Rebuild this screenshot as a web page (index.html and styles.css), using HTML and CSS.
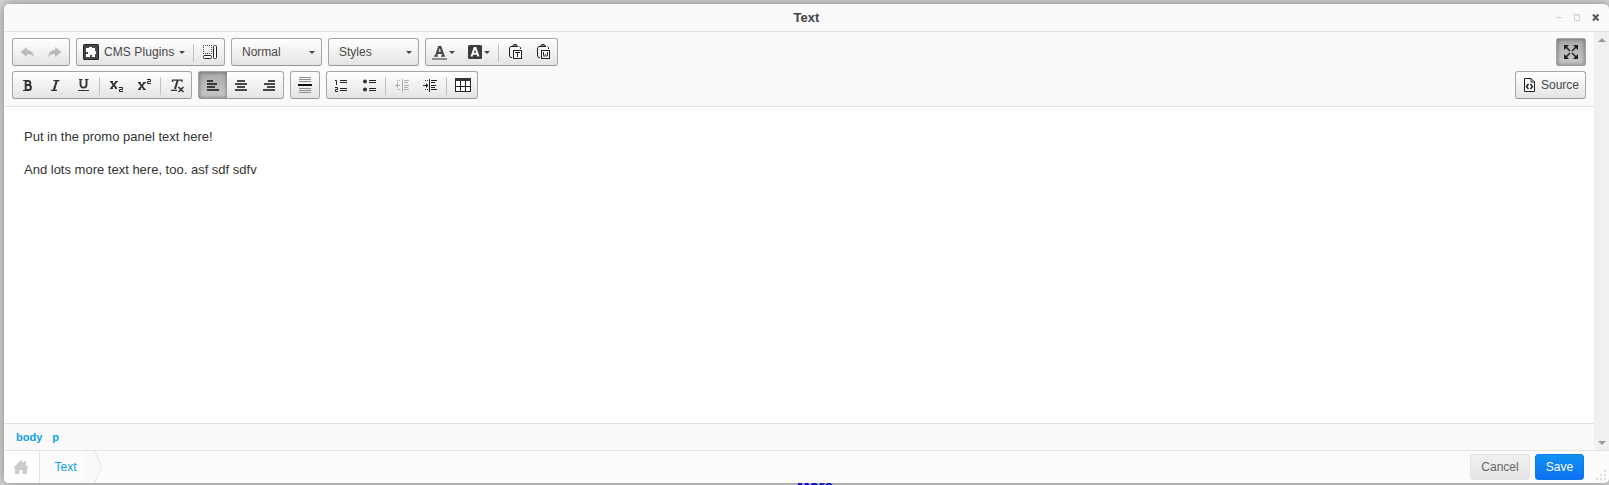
FILE: index.html
```html
<!DOCTYPE html>
<html lang="en">
<head>
<meta charset="utf-8">
<title>Text</title>
<link rel="stylesheet" href="styles.css">
</head>
<body>
<div class="page-link">More</div>
<div class="dialog">
  <header class="titlebar">
    <h1>Text</h1>
    <div class="window-controls">
      <svg width="60" height="26" viewBox="0 0 60 26"><path d="M2 13.500h6" stroke="#d2d2d2"/><path d="M20.500 10.500h5v6h-5zM20 11h6" fill="none" stroke="#d2d2d2"/><path d="M39 10.500l5.500 6M44.500 10.500l-5.500 6" stroke="#555" stroke-width="2"/></svg>
    </div>
  </header>
  <div class="main">
    <div class="editor">
      <div class="toolbar">
        <div class="tools">
          <div class="row">
            <div class="group">
              <span class="btn off"><svg class="ic" viewBox="0 0 16 16"><path d="M1.500 8L8 3v3c4 0 6.500 2.500 6.800 7C13.500 10.800 11.500 10 8 10v3z" fill="#555"/></svg></span>
              <span class="btn off"><svg class="ic" viewBox="0 0 16 16"><path d="M14.500 8L8 3v3c-4 0-6.500 2.500-6.800 7C2.500 10.800 4.500 10 8 10v3z" fill="#555"/></svg></span>
            </div>
            <div class="group">
              <span class="btn plugins"><svg class="ic" viewBox="0 0 16 16"><rect width="16" height="16" rx="1.500" fill="#222"/><rect x="1" y="1" width="14" height="14" fill="#484848"/><path d="M3 4h3V3h3v1h3v3h1v3h-1v3H9v-2H7v2H3v-3h2V8H3z" fill="#fff"/></svg><span class="label">CMS Plugins</span><i class="arrow"></i></span>
              <i class="sep"></i>
              <span class="btn"><svg class="ic" viewBox="0 0 16 16"><path d="M1 1.500h9M1 9.500h9M1.500 1v9M9.500 1v9" stroke="#444" stroke-dasharray="1 1"/><rect x="1.500" y="11.500" width="8" height="3" rx="1" fill="#fff" stroke="#222"/><rect x="11.500" y="1.500" width="3" height="13" rx="1" fill="#fff" stroke="#222"/></svg></span>
            </div>
            <div class="group combo"><span class="label">Normal</span><i class="arrow"></i></div>
            <div class="group combo"><span class="label">Styles</span><i class="arrow"></i></div>
            <div class="group">
              <span class="btn color"><svg class="ic" viewBox="0 0 16 16"><path d="M4 12L7 3h1.500L11.500 12M5.500 8.800h5" fill="none" stroke="#484848" stroke-width="2.200"/><path d="M2 12.200h4M9 12.200h4" stroke="#484848" stroke-width="1.200"/><path d="M0 15h15" stroke="#8b8b8b" stroke-width="2"/></svg><i class="arrow"></i></span>
              <span class="btn color"><svg class="ic" viewBox="0 0 16 16"><rect x="1" y="1" width="14" height="14" rx="1.500" fill="#3c3c3c"/><path d="M4.500 12.500L7.500 4h1L11.500 12.500M6 9.700h4.500" fill="none" stroke="#fff" stroke-width="1.900"/></svg><i class="arrow"></i></span>
              <i class="sep"></i>
              <span class="btn"><svg class="ic" viewBox="0 0 16 16"><path d="M5 2.500H3.500L2.500 4v8l1 1.500H5M12.500 2.500l1 1V5" fill="none" stroke="#222"/><path d="M5 3V1.500h1.500V0h3v1.500H11V3z" fill="#222"/><path d="M7.500 1.500h1" stroke="#fff"/><rect x="6.500" y="6.500" width="8" height="8" fill="#fff" stroke="#222"/><path d="M8 8.500h5M10.500 8v5" stroke="#222"/></svg></span>
              <span class="btn"><svg class="ic" viewBox="0 0 16 16"><path d="M5 2.500H3.500L2.500 4v8l1 1.500H5M12.500 2.500l1 1V5" fill="none" stroke="#222"/><path d="M5 3V1.500h1.500V0h3v1.500H11V3z" fill="#222"/><path d="M7.500 1.500h1" stroke="#fff"/><rect x="6.500" y="6.500" width="8" height="8" fill="#fff" stroke="#222"/><path d="M8.500 8v3.500l.8 1 1.200-2 1.200 2 .8-1V8" fill="none" stroke="#222"/></svg></span>
            </div>
          </div>
          <div class="row">
            <div class="group">
              <span class="btn"><svg class="ic" viewBox="0 0 16 16"><path d="M6 4h3.300c2.600 0 2.600 4 0 4H6.500M6 13h3.500c3.200 0 3.200-5 0-5M6.700 3v11" fill="none" stroke="#333" stroke-width="2"/><path d="M4 3.500h3M4 13.500h3" stroke="#333"/></svg></span>
              <span class="btn"><svg class="ic" viewBox="0 0 16 16"><path d="M6.500 3.600h6M4 13.400h6" stroke="#333" stroke-width="1.300"/><path d="M9.800 3.500l-3 10" stroke="#333" stroke-width="2.100"/></svg></span>
              <span class="btn"><svg class="ic" viewBox="0 0 16 16"><path d="M5.500 2v5.500c0 4.200 6 4.200 6 0V2" fill="none" stroke="#333" stroke-width="1.900"/><path d="M4 2.500h3.500M10 2.500h3.500M3 13.500h11" stroke="#333"/></svg></span>
              <i class="sep"></i>
              <span class="btn"><svg class="ic" viewBox="0 0 16 16"><path d="M3 4.500l5.500 7M8.500 4.500L3 11.500" stroke="#333" stroke-width="1.900"/><path d="M2 4.500h3M7 4.500h3M2 11.500h3M7 11.500h2" stroke="#333"/><path d="M11 10.500h3.500v2h-3v2H15" fill="none" stroke="#222"/></svg></span>
              <span class="btn"><svg class="ic" viewBox="0 0 16 16"><path d="M3 5.500l5.500 7M8.500 5.500L3 12.500" stroke="#333" stroke-width="1.900"/><path d="M2 5.500h3M7 5.500h3M2 12.500h3M7 12.500h3" stroke="#333"/><path d="M11 2.500h3.500v2h-3v2H15" fill="none" stroke="#222"/></svg></span>
              <i class="sep"></i>
              <span class="btn"><svg class="ic" viewBox="0 0 16 16"><path d="M3.500 5V3.200h9.500v1.800" fill="none" stroke="#333" stroke-width="1.300"/><path d="M8.800 3L6 12" stroke="#333" stroke-width="2"/><path d="M2 13.400h6" stroke="#333" stroke-width="1.200"/><path d="M9.500 10l5 5M14.500 10l-5 5" stroke="#333" stroke-width="1.500"/></svg></span>
            </div>
            <div class="group">
              <span class="btn on"><svg class="ic" viewBox="0 0 16 16"><path d="M2 4h6M2 7h10M2 10h8M2 13h12" stroke="#111" stroke-width="1.500"/></svg></span>
              <span class="btn"><svg class="ic" viewBox="0 0 16 16"><path d="M4 4h8M2 7h12M4 10h8M2 13h12" stroke="#111" stroke-width="1.500"/></svg></span>
              <span class="btn"><svg class="ic" viewBox="0 0 16 16"><path d="M7 4h7M3 7h11M6 10h8M2 13h12" stroke="#111" stroke-width="1.500"/></svg></span>
            </div>
            <div class="group">
              <span class="btn"><svg class="ic" viewBox="0 0 16 16"><path d="M2 .5h12M2 2.500h12M2 4.500h12M2 11.500h12M2 13.500h12M2 15.500h12" stroke="#8c8c8c"/><path d="M1 8h14" stroke="#111" stroke-width="2"/></svg></span>
            </div>
            <div class="group">
              <span class="btn"><svg class="ic" viewBox="0 0 16 16"><path d="M2 3.500h1.500V8M2 10.500h2.500v2h-2v2H5" fill="none" stroke="#222"/><path d="M7 3.500h7M7 5.500h7M7 11.500h7M7 13.500h7" stroke="#222"/></svg></span>
              <span class="btn"><svg class="ic" viewBox="0 0 16 16"><circle cx="4" cy="4.500" r="2" fill="#333"/><circle cx="4" cy="12.500" r="2" fill="#333"/><path d="M8 3.500h7M8 5.500h7M8 11.500h7M8 13.500h7" stroke="#222"/></svg></span>
              <i class="sep"></i>
              <span class="btn off"><svg class="ic" viewBox="0 0 16 16"><path d="M1 8.500h5M3.500 6.500v4M2.500 7.500v2M8.500 2v13" stroke="#333"/><path d="M3 3.500h4M3 5.500h2M3 12.500h4" stroke="#333" stroke-dasharray="1 1"/><path d="M10 3.500h5M10 5.500h4M10 8.500h5M10 10.500h4M10 12.500h5" stroke="#333"/></svg></span>
              <span class="btn"><svg class="ic" viewBox="0 0 16 16"><path d="M1 8.500h5M4.500 6.500v4M5.500 7.500v2M7.500 2v13" stroke="#222"/><path d="M3 3.500h4M3 12.500h4" stroke="#333" stroke-dasharray="1 1"/><path d="M9 3.500h6M9 5.500h4M9 8.500h5M9 10.500h4M9 12.500h6" stroke="#222"/></svg></span>
              <i class="sep"></i>
              <span class="btn"><svg class="ic" viewBox="0 0 16 16"><rect x=".5" y="1.500" width="15" height="13" fill="#fff" stroke="#222"/><path d="M0 2.500h16" stroke="#333" stroke-width="3"/><path d="M1 9.500h14M5.500 4v11M10.500 4v11" stroke="#222"/></svg></span>
            </div>
          </div>
        </div>
        <div class="view-tools">
          <div class="group"><span class="btn on"><svg class="ic" viewBox="0 0 16 16"><path d="M1 1h5L4.500 2.500 4 4 2.500 4.500 1 6zM15 1h-5l1.500 1.500L12 4l1.500.5L15 6zM1 15h5l-1.500-1.500L4 12l-1.500-.5L1 10zM15 15h-5l1.500-1.500L12 12l1.500-.5L15 10z" fill="#222"/><path d="M3 3l4 4M13 3L9 7M3 13l4-4M13 13L9 9" stroke="#222" stroke-width="1.500"/></svg></span></div>
          <div class="group"><span class="btn source"><svg class="ic" viewBox="0 0 16 16"><path d="M2.500 1.500h6.500l3.500 3.500v9.500h-10z" fill="#fff" stroke="#222"/><path d="M9 1.500v3.500h3.500" fill="none" stroke="#222"/><path d="M6.500 7L4.500 9.500l2 2.500M8.500 7l2 2.500-2 2.500" fill="none" stroke="#222" stroke-width="1.500"/></svg><span class="label">Source</span></span></div>
        </div>
      </div>
      <div class="content">
        <p>Put in the promo panel text here!</p>
        <p>And lots more text here, too. asf sdf sdfv</p>
      </div>
      <div class="path"><span>body</span><span>p</span></div>
    </div>
    <div class="scrollbar"><i class="up"></i><i class="down"></i></div>
  </div>
  <footer class="footer">
    <span class="home"><svg width="16" height="15" viewBox="0 0 16 15"><path d="M8 0l3 3V1h2v4l3 3h-2v6H9.500v-4h-3v4H2V8H0z" fill="#ccc"/></svg></span>
    <span class="crumb">Text</span>
    <svg class="chevron" width="19" height="32" viewBox="0 0 19 32"><path d="M0 0h10l8 16-8 16H0z" fill="#f9f9f9"/><path d="M10.500 0l7.500 16-7.500 16" fill="none" stroke="#e2e2e2"/></svg>
    <span class="action cancel">Cancel</span>
    <span class="action save">Save</span>
    <svg class="grip" width="12" height="12" viewBox="0 0 12 12"><path d="M8 0h2v2H8zM4 4h2v2H4zM8 4h2v2H8zM0 8h2v2H0zM4 8h2v2H4zM8 8h2v2H8z" fill="#dcdcdc"/></svg>
  </footer>
</div>
</body>
</html>
```
FILE: styles.css
```css
* { box-sizing: border-box; }
body {
  margin: 0;
  height: 485px;
  padding: 4px 0 2px 4px;
  overflow: hidden;
  position: relative;
  background: #d6d6d6;
  font-family: "Liberation Sans", Arial, sans-serif;
}
.dialog {
  position: relative;
  display: flex;
  flex-direction: column;
  height: 479px;
  border-radius: 5px;
  background: #fafafa;
  overflow: hidden;
  box-shadow: 0 0 12px rgba(0, 0, 0, .4);
}
.page-link {
  position: absolute;
  z-index: 1;
  left: 797px;
  top: 477px;
  font-size: 15px;
  line-height: 17px;
  font-weight: bold;
  color: #00c;
  clip-path: inset(6px 0 0);
}
.titlebar {
  position: relative;
  flex: 0 0 28px;
  border-bottom: 1px solid #e2e2e2;
}
.titlebar h1 {
  margin: 0;
  text-align: center;
  font: bold 13px/27px "Liberation Sans", Arial, sans-serif;
  color: #444;
}
.window-controls { position: absolute; right: 0; top: 0; width: 55px; }
.window-controls svg { display: block; }
.main { flex: 1; display: flex; min-height: 0; }
.editor { flex: 1; display: flex; flex-direction: column; }
.toolbar {
  display: flex;
  justify-content: space-between;
  height: 75px;
  padding: 6px 8px 0;
  border-bottom: 1px solid #e2e2e2;
}
.tools, .view-tools { display: flex; flex-direction: column; gap: 5px; }
.view-tools { align-items: flex-end; }
.row { display: flex; gap: 6px; }
.group {
  display: flex;
  height: 28px;
  border: 1px solid #a6a6a6;
  border-bottom-color: #979797;
  border-radius: 3px;
  background: linear-gradient(#fff, #e4e4e4);
}
.btn { display: flex; align-items: center; justify-content: center; width: 28px; height: 26px; }
.ic { width: 16px; height: 16px; flex: none; }
.off .ic { opacity: .35; }
.on { background: linear-gradient(#aaa, #cacaca); box-shadow: inset 0 0 4px rgba(0, 0, 0, .45); }
.sep { width: 1px; height: 18px; margin: 5px 2px 0; background: #c0c0c0; }
.label { font-size: 12px; line-height: 26px; color: #474747; white-space: nowrap; }
.arrow {
  flex: none;
  width: 0;
  border: 3px solid transparent;
  border-top-color: #474747;
  border-bottom: 0;
}
.plugins { width: 114px; justify-content: flex-start; padding-left: 6px; }
.plugins .label { margin: 0 6px 0 5px; width: 69px; letter-spacing: .09px; }
.combo { width: 91px; align-items: center; justify-content: space-between; padding: 0 6px 0 10px; }
.color { width: 35px; justify-content: flex-start; padding-left: 6px; }
.color .arrow { margin-left: 1px; }
.source { width: 69px; justify-content: flex-start; padding-left: 6px; }
.source .label { margin-left: 3px; }
.content { flex: 1; background: #fff; padding: 20px; color: #333; }
.content p { margin: 0 0 13px; font-size: 13px; line-height: 20px; }
.path {
  height: 27px;
  border-top: 1px solid #e2e2e2;
  padding-left: 12px;
  display: flex;
  gap: 10px;
  font-size: 11px;
  line-height: 26px;
  font-weight: bold;
  color: #0e9fe8;
}
.scrollbar {
  width: 15px;
  background: #f0f0f0;
  display: flex;
  flex-direction: column;
  justify-content: space-between;
  padding: 6px 4px 5px;
}
.up, .down { width: 0; border: 4px solid transparent; }
.up { border-top: 0; border-bottom-color: #999; }
.down { border-bottom: 0; border-top-color: #999; }
.footer {
  position: relative;
  flex: 0 0 33px;
  min-height: 0;
  display: flex;
  border-top: 1px solid #e2e2e2;
  background: #fcfcfc;
  padding-right: 25px;
}
.home {
  width: 36px;
  background: #fff;
  border-right: 1px solid #e2e2e2;
  display: flex;
  align-items: center;
  justify-content: center;
  padding: 1px 1px 0 0;
}
.crumb { width: 44px; padding-left: 14.5px; font-size: 12px; line-height: 32px; color: #0e9fe8; }
.chevron { margin-right: auto; }
.action {
  height: 26px;
  margin-top: 3px;
  border: 1px solid #e2e2e2;
  border-radius: 3px;
  font-size: 12px;
  line-height: 25px;
  text-align: center;
}
.cancel { width: 60px; color: #666; background: linear-gradient(#f0f0f0, #e6e6e6); margin-right: 5px; }
.save { width: 49px; color: #fff; border-color: #0b7ae8; background: linear-gradient(#1192f2, #0d6ff2); }
.grip { position: absolute; right: 1px; bottom: 1px; }
```
